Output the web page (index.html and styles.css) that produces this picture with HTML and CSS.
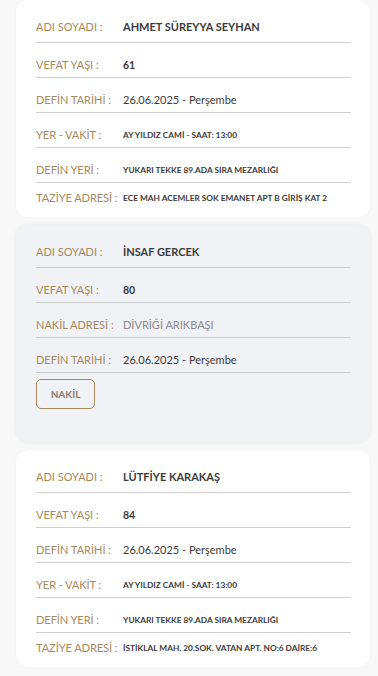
FILE: index.html
```html
<!DOCTYPE html>
<html lang="tr">
<head>
    <meta charset="UTF-8">
    <meta name="viewport" content="width=device-width, initial-scale=1.0">
    <title>Vefat İlanları</title>
    <link rel="stylesheet" href="styles.css">
</head>
<body>
    <div class="list">
        <div class="card">
            <div class="row">
                <span class="label">ADI SOYADI :</span>
                <span class="value name">AHMET SÜREYYA SEYHAN</span>
            </div>
            <div class="row">
                <span class="label">VEFAT YAŞI :</span>
                <span class="value age">61</span>
            </div>
            <div class="row">
                <span class="label">DEFİN TARİHİ :</span>
                <span class="value">26.06.2025 - Perşembe</span>
            </div>
            <div class="row">
                <span class="label big">YER - VAKİT :</span>
                <span class="value small">AY YILDIZ CAMİ - SAAT: 13:00</span>
            </div>
            <div class="row">
                <span class="label big">DEFİN YERİ :</span>
                <span class="value small">YUKARI TEKKE 89.ADA SIRA MEZARLIĞI</span>
            </div>
            <div class="row last">
                <span class="label big">TAZİYE ADRESİ :</span>
                <span class="value small">ECE MAH ACEMLER SOK EMANET APT B GİRİŞ KAT 2</span>
            </div>
        </div>

        <div class="card nakil">
            <div class="row">
                <span class="label">ADI SOYADI :</span>
                <span class="value name">İNSAF GERCEK</span>
            </div>
            <div class="row">
                <span class="label">VEFAT YAŞI :</span>
                <span class="value age">80</span>
            </div>
            <div class="row">
                <span class="label">NAKİL ADRESİ :</span>
                <span class="value muted">DİVRİĞİ ARIKBAŞI</span>
            </div>
            <div class="row">
                <span class="label">DEFİN TARİHİ :</span>
                <span class="value">26.06.2025 - Perşembe</span>
            </div>
            <button class="btn">NAKİL</button>
        </div>

        <div class="card">
            <div class="row">
                <span class="label">ADI SOYADI :</span>
                <span class="value name">LÜTFİYE KARAKAŞ</span>
            </div>
            <div class="row">
                <span class="label">VEFAT YAŞI :</span>
                <span class="value age">84</span>
            </div>
            <div class="row">
                <span class="label">DEFİN TARİHİ :</span>
                <span class="value">26.06.2025 - Perşembe</span>
            </div>
            <div class="row">
                <span class="label big">YER - VAKİT :</span>
                <span class="value small">AY YILDIZ CAMİ - SAAT: 13:00</span>
            </div>
            <div class="row">
                <span class="label big">DEFİN YERİ :</span>
                <span class="value small">YUKARI TEKKE 89.ADA SIRA MEZARLIĞI</span>
            </div>
            <div class="row last">
                <span class="label big">TAZİYE ADRESİ :</span>
                <span class="value small">İSTİKLAL MAH. 20.SOK. VATAN APT. NO:6 DAİRE:6</span>
            </div>
        </div>
    </div>
</body>
</html>
```

FILE: styles.css
```css
body {
    font-family: Lato, "Noto Sans", sans-serif;
    margin: 0;
    padding: 0;
    background-color: #f8f8f9;
}

.list {
    display: flex;
    flex-direction: column;
    gap: 8px;
    padding: 0 8px 0 16px;
}

.card {
    box-sizing: border-box;
    height: 217px;
    background: #fff;
    border-radius: 12px;
    padding: 0 19px 0 20px;
    box-shadow: 0 0 3px rgba(0, 0, 0, 0.04);
}

.card.nakil {
    background: #f1f2f6;
    box-shadow: 0 0 4px rgba(0, 0, 0, 0.08);
}

.row {
    box-sizing: border-box;
    height: 35px;
    display: flex;
    align-items: center;
    padding: 13px 0 3px;
    line-height: 18px;
    border-bottom: 1px solid #cfcfcf;
}

.row:first-child {
    height: 43px;
    padding-top: 18px;
    padding-bottom: 6px;
}

.row.last {
    height: 24px;
    padding-top: 6px;
    padding-bottom: 0;
    border-bottom: none;
}

.label {
    width: 87px;
    flex-shrink: 0;
    font-size: 11px;
    color: #a58a5e;
    white-space: nowrap;
}

.label.big {
    font-size: 11.2px;
    letter-spacing: -0.15px;
}

.value {
    font-size: 11px;
    color: #3b3b3b;
    white-space: nowrap;
}

.value.name {
    font-weight: 700;
}

.value.age {
    font-weight: 700;
    font-size: 10.5px;
}

.value.small {
    font-size: 8.3px;
    font-weight: 700;
}

.value.muted {
    color: #8a8a8a;
}

.btn {
    display: block;
    margin-top: 6px;
    width: 59px;
    height: 30px;
    padding: 0;
    font-family: inherit;
    font-size: 10px;
    font-weight: 700;
    color: #8b7d6e;
    background: transparent;
    border: 1px solid #a8875a;
    border-radius: 5px;
    cursor: pointer;
}
```
